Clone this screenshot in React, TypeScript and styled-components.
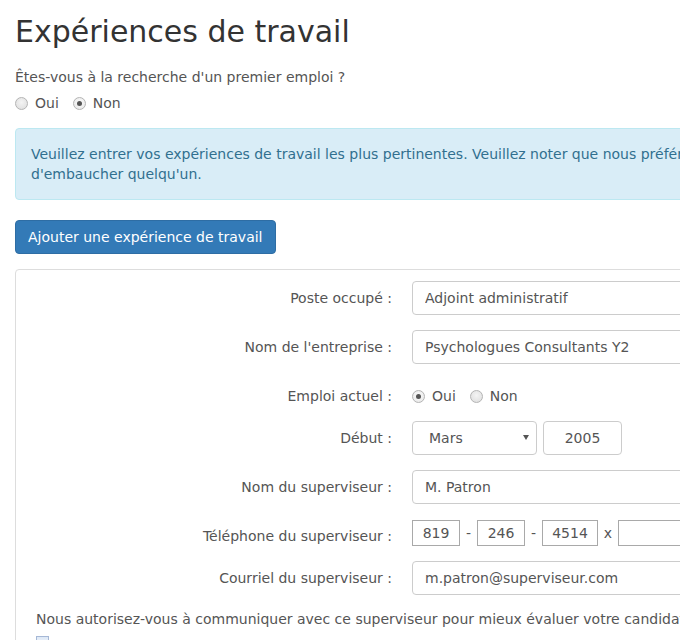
import React from "react";
import styled, { createGlobalStyle } from "styled-components";

const GlobalStyle = createGlobalStyle`
  html, body {
    margin: 0;
    padding: 0;
    background: #fff;
    overflow: hidden;
  }
  body {
    font-family: "DejaVu Sans", "Liberation Sans", sans-serif;
    font-size: 14px;
    line-height: 20px;
    color: #555;
  }
`;

const Page = styled.div`
  width: 1000px;
  padding: 0 15px;
  box-sizing: border-box;
`;

const Title = styled.h1`
  margin: 12px 0 0;
  font-size: 30px;
  line-height: 40px;
  font-weight: 400;
  color: #333;
`;

const Question = styled.p`
  margin: 15px 0 0;
`;

const RadioGroup = styled.div<{ $inline?: boolean }>`
  display: flex;
  align-items: center;
  gap: 14px;
  margin-top: ${(p) => (p.$inline ? "0" : "6px")};
`;

const RadioLabel = styled.label`
  display: inline-flex;
  align-items: center;
  gap: 7px;
`;

const Radio = styled.input.attrs({ type: "radio" })`
  appearance: none;
  margin: 0;
  width: 13px;
  height: 13px;
  border-radius: 50%;
  border: 1px solid #b4b4b4;
  background: radial-gradient(circle at 50% 40%, #f4f4f4 0%, #dcdcdc 100%);
  box-sizing: border-box;
  display: grid;
  place-items: center;
  &:checked::after {
    content: "";
    width: 5px;
    height: 5px;
    border-radius: 50%;
    background: #555;
  }
  &:checked {
    background: radial-gradient(circle at 50% 40%, #fafafa 0%, #e6e6e6 100%);
  }
`;

const Alert = styled.div`
  margin-top: 15px;
  padding: 15px;
  border: 1px solid #bce8f1;
  border-radius: 4px;
  background: #d9edf7;
  color: #31708f;
  white-space: nowrap;
`;

const PrimaryButton = styled.button`
  margin-top: 20px;
  display: inline-block;
  height: 34px;
  padding: 0 12px;
  font-family: inherit;
  font-size: 14px;
  color: #fff;
  background: #337ab7;
  border: 1px solid #2e6da4;
  border-radius: 4px;
`;

const Panel = styled.div`
  margin-top: 15px;
  border: 1px solid #ddd;
  border-radius: 4px;
  padding: 11px 20px 20px;
  display: flex;
  flex-direction: column;
  gap: 15px;
`;

const FormRow = styled.div`
  display: grid;
  grid-template-columns: 356px 1fr;
  column-gap: 20px;
  align-items: start;
`;

const Label = styled.label<{ $pad?: number }>`
  text-align: right;
  padding-top: ${(p) => p.$pad ?? 7}px;
`;

const TextInput = styled.input`
  width: 100%;
  height: 34px;
  box-sizing: border-box;
  padding: 6px 12px;
  font-family: inherit;
  font-size: 14px;
  color: #555;
  border: 1px solid #ccc;
  border-radius: 4px;
  background: #fff;
  outline: none;
`;

const RadioField = styled.div`
  padding-top: 7px;
`;

const DateGroup = styled.div`
  display: flex;
  gap: 6px;
`;

const SelectWrap = styled.div`
  position: relative;
  width: 125px;
`;

const Select = styled.select`
  appearance: none;
  width: 100%;
  height: 34px;
  box-sizing: border-box;
  padding: 0 16px;
  font-family: inherit;
  font-size: 14px;
  color: #555;
  border: 1px solid #ccc;
  border-radius: 4px;
  background: #fff;
`;

const Caret = styled.span`
  position: absolute;
  right: 8px;
  top: 14px;
  width: 0;
  height: 0;
  border-left: 3px solid transparent;
  border-right: 3px solid transparent;
  border-top: 5px solid #555;
  pointer-events: none;
`;

const YearInput = styled(TextInput)`
  width: 79px;
  text-align: center;
`;

const PhoneGroup = styled.div`
  display: flex;
  align-items: center;
  height: 27px;
`;

const PhoneInput = styled.input<{ $w: number }>`
  width: ${(p) => p.$w}px;
  height: 26px;
  box-sizing: border-box;
  padding: 0;
  text-align: center;
  font-family: inherit;
  font-size: 14px;
  color: #555;
  border: 1px solid #a9a9a9;
  border-radius: 0;
  outline: none;
`;

const PhoneSep = styled.span<{ $w: number }>`
  width: ${(p) => p.$w}px;
  text-align: center;
  color: #555;
`;

const ExtInput = styled(PhoneInput)`
  flex: 1;
`;

const Consent = styled.p`
  margin: -1px 0 0;
`;

const Check = styled.input.attrs({ type: "checkbox" })`
  appearance: none;
  flex: none;
  margin: -8px 0 0;
  width: 13px;
  height: 13px;
  border: 1px solid #a6b8d6;
  background: linear-gradient(#dde8f6, #fff);
`;

export default function App() {
  return (
    <>
      <GlobalStyle />
      <Page>
        <Title>Expériences de travail</Title>
        <Question>Êtes-vous à la recherche d'un premier emploi ?</Question>
        <RadioGroup>
          <RadioLabel>
            <Radio name="premier" /> Oui
          </RadioLabel>
          <RadioLabel>
            <Radio name="premier" defaultChecked /> Non
          </RadioLabel>
        </RadioGroup>
        <Alert>
          Veuillez entrer vos expériences de travail les plus pertinentes. Veuillez noter que nous préférons communiquer avec vos anciens employeurs avant
          <br />
          d'embaucher quelqu'un.
        </Alert>
        <PrimaryButton>Ajouter une expérience de travail</PrimaryButton>
        <Panel>
          <FormRow>
            <Label>Poste occupé :</Label>
            <TextInput defaultValue="Adjoint administratif" />
          </FormRow>
          <FormRow>
            <Label>Nom de l'entreprise :</Label>
            <TextInput defaultValue="Psychologues Consultants Y2" />
          </FormRow>
          <FormRow>
            <Label>Emploi actuel :</Label>
            <RadioField>
              <RadioGroup $inline>
                <RadioLabel>
                  <Radio name="actuel" defaultChecked /> Oui
                </RadioLabel>
                <RadioLabel>
                  <Radio name="actuel" /> Non
                </RadioLabel>
              </RadioGroup>
            </RadioField>
          </FormRow>
          <FormRow>
            <Label>Début :</Label>
            <DateGroup>
              <SelectWrap>
                <Select defaultValue="3">
                  <option value="1">Janvier</option>
                  <option value="2">Février</option>
                  <option value="3">Mars</option>
                  <option value="4">Avril</option>
                </Select>
                <Caret />
              </SelectWrap>
              <YearInput defaultValue="2005" />
            </DateGroup>
          </FormRow>
          <FormRow>
            <Label>Nom du superviseur :</Label>
            <TextInput defaultValue="M. Patron" />
          </FormRow>
          <FormRow>
            <Label $pad={7}>Téléphone du superviseur :</Label>
            <PhoneGroup>
              <PhoneInput $w={48} defaultValue="819" />
              <PhoneSep $w={17}>-</PhoneSep>
              <PhoneInput $w={48} defaultValue="246" />
              <PhoneSep $w={17}>-</PhoneSep>
              <PhoneInput $w={56} defaultValue="4514" />
              <PhoneSep $w={20}>x</PhoneSep>
              <ExtInput $w={100} defaultValue="" />
            </PhoneGroup>
          </FormRow>
          <FormRow>
            <Label>Courriel du superviseur :</Label>
            <TextInput defaultValue="m.patron@superviseur.com" />
          </FormRow>
          <Consent>
            Nous autorisez-vous à communiquer avec ce superviseur pour mieux évaluer votre candidature ?
          </Consent>
          <Check />
        </Panel>
      </Page>
    </>
  );
}
